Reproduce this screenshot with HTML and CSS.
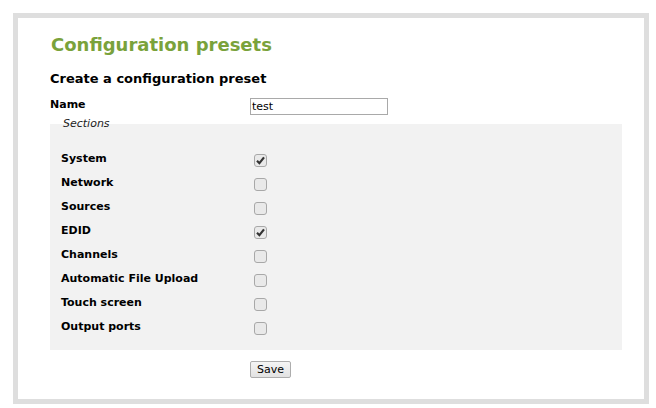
FILE: index.html
```html
<!DOCTYPE html>
<html>
<head>
<meta charset="utf-8">
<link rel="stylesheet" href="styles.css">
</head>
<body>
<div class="frame">
  <h1 class="title">Configuration presets</h1>
  <h2 class="subtitle">Create a configuration preset</h2>
  <div class="name-row">
    <label class="name-label">Name</label>
    <div class="name-input">test</div>
  </div>
  <div class="legend">Sections</div>
  <div class="panel">
    <div class="row"><span class="lbl">System</span><span class="cb"><svg width="13" height="13" viewBox="0 0 13 13"><rect x="0.5" y="0.5" width="12" height="12" rx="2.5" fill="#e9e9e9" stroke="#a8a8a8"/><path d="M3 6.8 L5.4 9.2 L10 3.4" fill="none" stroke="#333" stroke-width="2.2"/></svg></span></div>
    <div class="row"><span class="lbl">Network</span><span class="cb"><svg width="13" height="13" viewBox="0 0 13 13"><rect x="0.5" y="0.5" width="12" height="12" rx="2.5" fill="#e9e9e9" stroke="#a8a8a8"/></svg></span></div>
    <div class="row"><span class="lbl">Sources</span><span class="cb"><svg width="13" height="13" viewBox="0 0 13 13"><rect x="0.5" y="0.5" width="12" height="12" rx="2.5" fill="#e9e9e9" stroke="#a8a8a8"/></svg></span></div>
    <div class="row"><span class="lbl">EDID</span><span class="cb"><svg width="13" height="13" viewBox="0 0 13 13"><rect x="0.5" y="0.5" width="12" height="12" rx="2.5" fill="#e9e9e9" stroke="#a8a8a8"/><path d="M3 6.8 L5.4 9.2 L10 3.4" fill="none" stroke="#333" stroke-width="2.2"/></svg></span></div>
    <div class="row"><span class="lbl">Channels</span><span class="cb"><svg width="13" height="13" viewBox="0 0 13 13"><rect x="0.5" y="0.5" width="12" height="12" rx="2.5" fill="#e9e9e9" stroke="#a8a8a8"/></svg></span></div>
    <div class="row"><span class="lbl">Automatic File Upload</span><span class="cb"><svg width="13" height="13" viewBox="0 0 13 13"><rect x="0.5" y="0.5" width="12" height="12" rx="2.5" fill="#e9e9e9" stroke="#a8a8a8"/></svg></span></div>
    <div class="row"><span class="lbl">Touch screen</span><span class="cb"><svg width="13" height="13" viewBox="0 0 13 13"><rect x="0.5" y="0.5" width="12" height="12" rx="2.5" fill="#e9e9e9" stroke="#a8a8a8"/></svg></span></div>
    <div class="row"><span class="lbl">Output ports</span><span class="cb"><svg width="13" height="13" viewBox="0 0 13 13"><rect x="0.5" y="0.5" width="12" height="12" rx="2.5" fill="#e9e9e9" stroke="#a8a8a8"/></svg></span></div>
  </div>
  <div class="actions">
    <button class="save">Save</button>
  </div>
</div>
</body>
</html>
```

FILE: styles.css
```css
* { box-sizing: border-box; }
html, body { margin: 0; padding: 0; background: #fff; }
body {
  padding: 13px;
  font-family: "DejaVu Sans", Verdana, sans-serif;
  color: #000;
}
.frame {
  width: 636px;
  height: 391px;
  border: 5px solid #dedede;
  background: #fff;
  padding: 15px 0 0 32px;
}
.title {
  margin: 0 0 0 1px;
  font-size: 18px;
  line-height: 23px;
  font-weight: bold;
  color: #7aa23b;
}
.subtitle {
  margin: 15px 0 0 0;
  font-size: 13px;
  line-height: 16px;
  font-weight: bold;
}
.name-row {
  display: grid;
  grid-template-columns: 200px 138px;
  margin-top: 11px;
  height: 17px;
}
.name-label {
  font-size: 11px;
  font-weight: bold;
  line-height: 14px;
}
.name-input {
  border: 1px solid #a9a9a9;
  height: 17px;
  font-size: 11px;
  line-height: 15px;
  padding-left: 1px;
}
.legend {
  margin: 2px 0 -7px 13px;
  font-size: 11px;
  font-style: italic;
  line-height: 14px;
  color: #222;
}
.panel {
  width: 572px;
  background: #f2f2f2;
  padding: 23px 0 11px 11px;
}
.row {
  display: grid;
  grid-template-columns: 189px auto;
  align-items: center;
  height: 24px;
}
.lbl {
  font-size: 11px;
  font-weight: bold;
  line-height: 24px;
}
.cb {
  display: flex;
  padding-left: 4px;
  margin-top: 2px;
}
.actions {
  display: flex;
  padding-left: 200px;
  margin-top: 11px;
}
.save {
  width: 41px;
  height: 17px;
  padding: 0;
  font-family: "DejaVu Sans", Verdana, sans-serif;
  font-size: 11px;
  line-height: 15px;
  color: #000;
  border: 1px solid #adadad;
  border-radius: 2px;
  background: linear-gradient(#f5f5f5, #e2e2e2);
}
```
